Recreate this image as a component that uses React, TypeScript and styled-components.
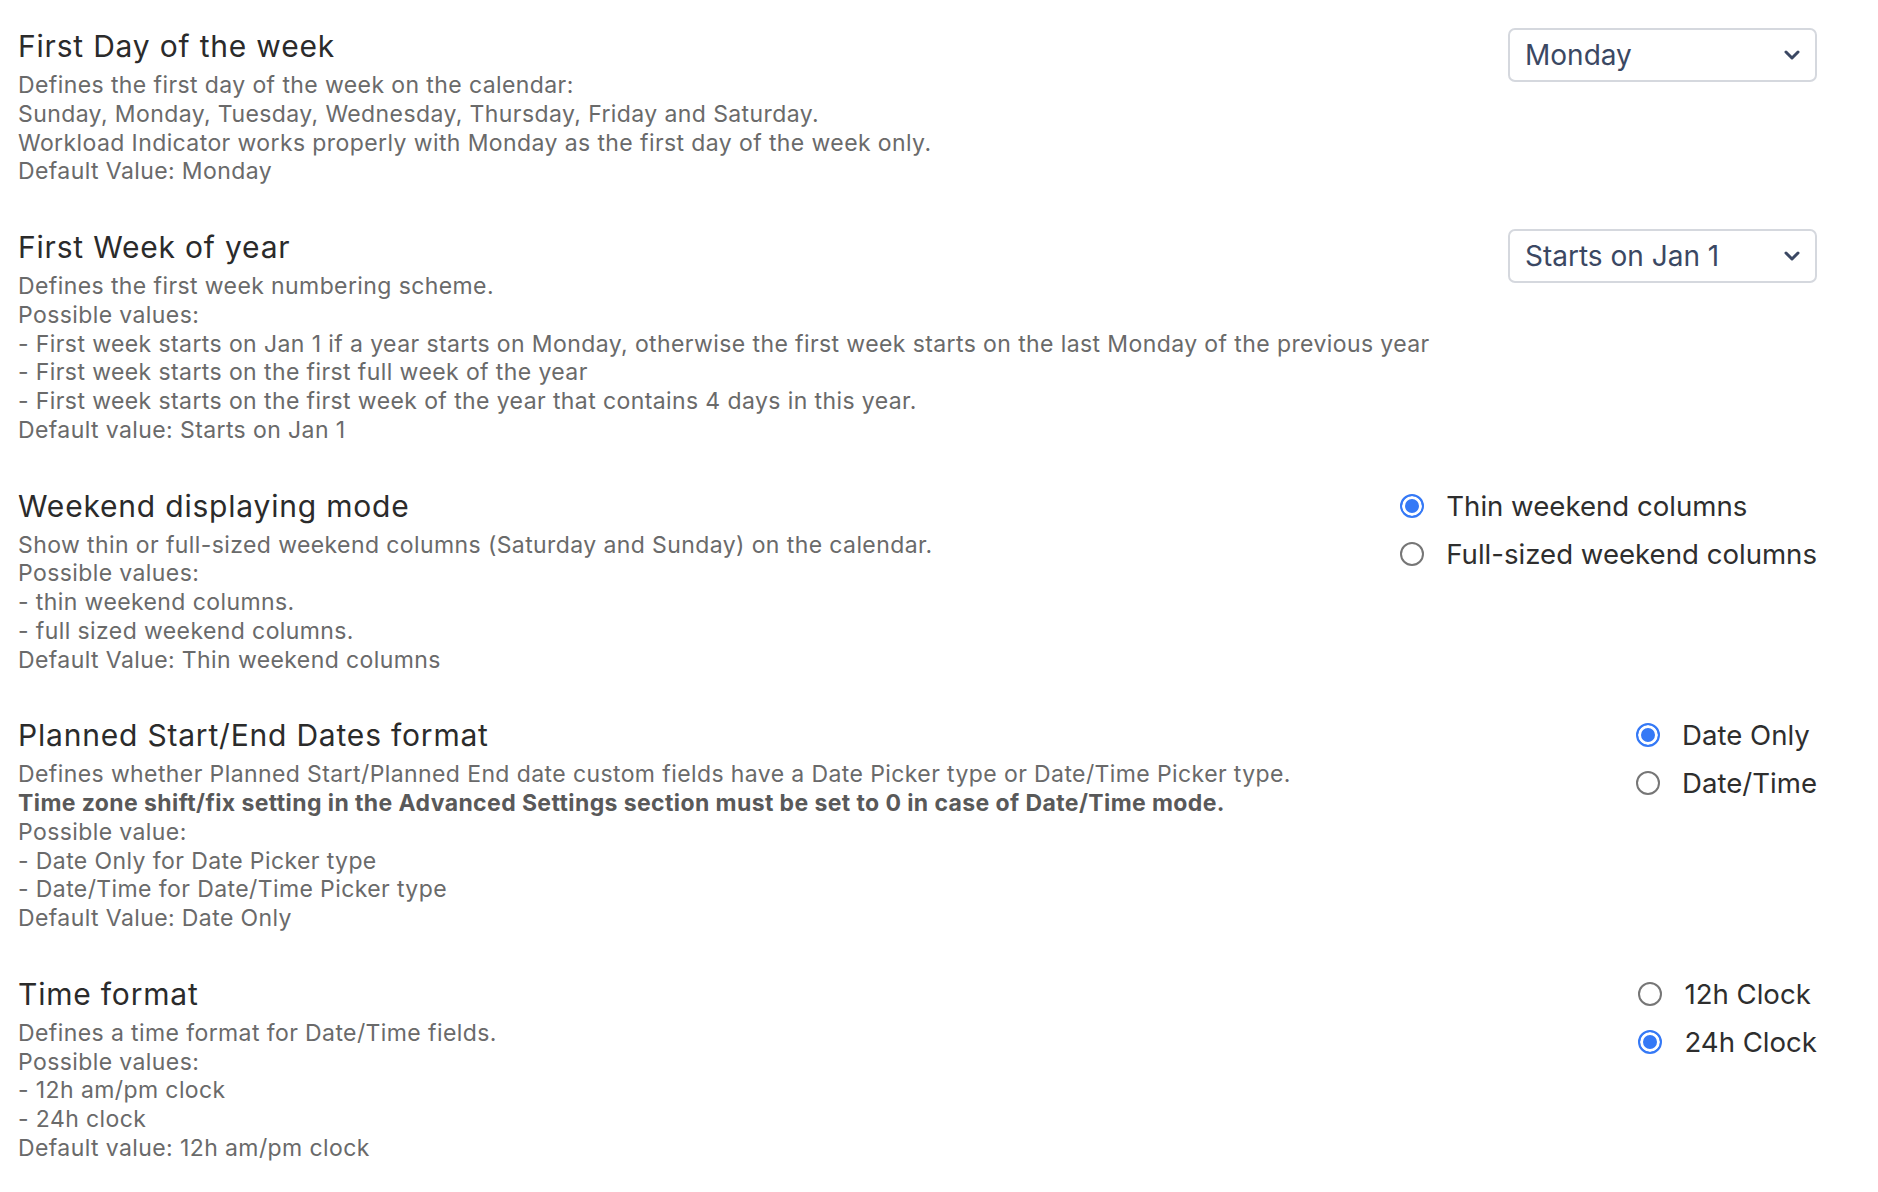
import styled, { createGlobalStyle } from 'styled-components';

const GlobalStyle = createGlobalStyle`
  html, body {
    margin: 0;
    padding: 0;
    background: #ffffff;
  }
  body {
    font-family: Inter, "Noto Sans", sans-serif;
  }
`;

type SelectSetting = {
  kind: 'select';
  value: string;
};

type RadioSetting = {
  kind: 'radio';
  options: string[];
  checked: number;
};

type Setting = {
  title: string;
  lines: { text: string; bold?: boolean }[];
  control: SelectSetting | RadioSetting;
};

const settings: Setting[] = [
  {
    title: 'First Day of the week',
    lines: [
      { text: 'Defines the first day of the week on the calendar:' },
      { text: 'Sunday, Monday, Tuesday, Wednesday, Thursday, Friday and Saturday.' },
      { text: 'Workload Indicator works properly with Monday as the first day of the week only.' },
      { text: 'Default Value: Monday' },
    ],
    control: { kind: 'select', value: 'Monday' },
  },
  {
    title: 'First Week of year',
    lines: [
      { text: 'Defines the first week numbering scheme.' },
      { text: 'Possible values:' },
      {
        text: '- First week starts on Jan 1 if a year starts on Monday, otherwise the first week starts on the last Monday of the previous year',
      },
      { text: '- First week starts on the first full week of the year' },
      { text: '- First week starts on the first week of the year that contains 4 days in this year.' },
      { text: 'Default value: Starts on Jan 1' },
    ],
    control: { kind: 'select', value: 'Starts on Jan 1' },
  },
  {
    title: 'Weekend displaying mode',
    lines: [
      { text: 'Show thin or full-sized weekend columns (Saturday and Sunday) on the calendar.' },
      { text: 'Possible values:' },
      { text: '- thin weekend columns.' },
      { text: '- full sized weekend columns.' },
      { text: 'Default Value: Thin weekend columns' },
    ],
    control: { kind: 'radio', options: ['Thin weekend columns', 'Full-sized weekend columns'], checked: 0 },
  },
  {
    title: 'Planned Start/End Dates format',
    lines: [
      {
        text: 'Defines whether Planned Start/Planned End date custom fields have a Date Picker type or Date/Time Picker type.',
      },
      {
        text: 'Time zone shift/fix setting in the Advanced Settings section must be set to 0 in case of Date/Time mode.',
        bold: true,
      },
      { text: 'Possible value:' },
      { text: '- Date Only for Date Picker type' },
      { text: '- Date/Time for Date/Time Picker type' },
      { text: 'Default Value: Date Only' },
    ],
    control: { kind: 'radio', options: ['Date Only', 'Date/Time'], checked: 0 },
  },
  {
    title: 'Time format',
    lines: [
      { text: 'Defines a time format for Date/Time fields.' },
      { text: 'Possible values:' },
      { text: '- 12h am/pm clock' },
      { text: '- 24h clock' },
      { text: 'Default value: 12h am/pm clock' },
    ],
    control: { kind: 'radio', options: ['12h Clock', '24h Clock'], checked: 1 },
  },
];

const Chevron = () => (
  <svg width="16" height="10" viewBox="0 0 16 10" fill="none">
    <path d="M2 2l6 6 6-6" stroke="#3b4863" strokeWidth="3" strokeLinecap="round" strokeLinejoin="round" />
  </svg>
);

const App = () => {
  return (
    <Page>
      <GlobalStyle />
      {settings.map((s) => (
        <Section key={s.title}>
          <Info>
            <Title>{s.title}</Title>
            <Description>
              {s.lines.map((l, i) => (
                <Line key={i} bold={l.bold}>
                  {l.text}
                </Line>
              ))}
            </Description>
          </Info>
          {s.control.kind === 'select' ? (
            <SelectBox>
              <span>{s.control.value}</span>
              <Chevron />
            </SelectBox>
          ) : (
            <RadioGroup>
              {s.control.options.map((opt, i) => (
                <RadioRow key={opt}>
                  <RadioDot checked={i === (s.control as RadioSetting).checked} />
                  <RadioLabel>{opt}</RadioLabel>
                </RadioRow>
              ))}
            </RadioGroup>
          )}
        </Section>
      ))}
    </Page>
  );
};

export default App;

const Page = styled.div`
  padding: 28px 61px 40px 18px;
  display: flex;
  flex-direction: column;
  gap: 43px;
`;

const Section = styled.section`
  display: flex;
  justify-content: space-between;
  align-items: flex-start;
  gap: 24px;
`;

const Info = styled.div`
  display: flex;
  flex-direction: column;
  gap: 7px;
  min-width: 0;
`;

const Title = styled.h3`
  margin: 0;
  font-size: 30px;
  line-height: 36px;
  letter-spacing: 0.8px;
  font-weight: 400;
  color: #2b2b2b;
`;

const Description = styled.div`
  display: flex;
  flex-direction: column;
`;

const Line = styled.div<{ bold?: boolean }>`
  font-size: 23px;
  line-height: 28.75px;
  letter-spacing: 0.4px;
  color: ${({ bold }) => (bold ? '#595959' : '#6a6a6a')};
  font-weight: ${({ bold }) => (bold ? 700 : 400)};
  white-space: nowrap;
`;

const SelectBox = styled.div`
  flex: none;
  box-sizing: border-box;
  width: 309px;
  height: 54px;
  padding: 0 15px 0 15px;
  display: flex;
  align-items: center;
  justify-content: space-between;
  border: 2px solid #d5d8de;
  border-radius: 7px;
  font-size: 28px;
  color: #3b4863;
  background: #ffffff;
`;

const RadioGroup = styled.div`
  flex: none;
  display: flex;
  flex-direction: column;
  gap: 8px;
  margin-top: -2px;
`;

const RadioRow = styled.label`
  display: flex;
  align-items: center;
  gap: 22px;
  height: 40px;
`;

const RadioDot = styled.span<{ checked: boolean }>`
  box-sizing: border-box;
  width: 24px;
  height: 24px;
  border-radius: 50%;
  border: 2px solid ${({ checked }) => (checked ? '#3579f6' : '#767676')};
  background: ${({ checked }) => (checked ? '#3579f6' : '#ffffff')};
  box-shadow: ${({ checked }) => (checked ? 'inset 0 0 0 3px #ffffff' : 'none')};
`;

const RadioLabel = styled.span`
  font-size: 27.6px;
  line-height: 40px;
  color: #2e2e2e;
`;
